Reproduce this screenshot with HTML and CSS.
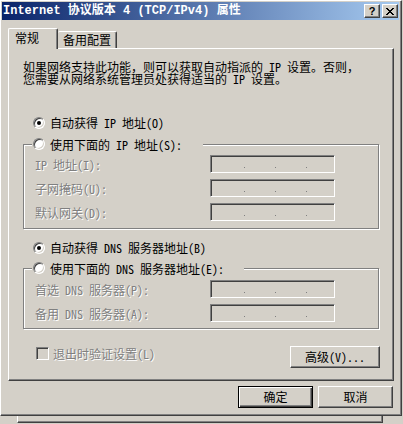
FILE: index.html
```html
<!DOCTYPE html>
<html lang="zh-CN">
<head>
<meta charset="utf-8">
<title>Internet 协议版本 4 (TCP/IPv4) 属性</title>
<link rel="stylesheet" href="styles.css">
</head>
<body>
<div class="window">
  <div class="titlebar">
    <span class="title">Internet 协议版本 4 (TCP/IPv4) 属性</span>
    <div class="tbtns">
      <span class="tbtn help">?</span>
      <span class="tbtn close"><svg width="8" height="7" viewBox="0 0 8 7" shape-rendering="crispEdges"><path d="M0 0h2v1h-2zM6 0h2v1h-2zM1 1h2v1h-2zM5 1h2v1h-2zM2 2h4v1h-4zM3 3h2v1h-2zM2 4h4v1h-4zM1 5h2v1h-2zM5 5h2v1h-2zM0 6h2v1h-2zM6 6h2v1h-2z" fill="#000"/></svg></span>
    </div>
  </div>
  <div class="body">
    <div class="tabs">
      <div class="tab active">常规</div>
      <div class="tab">备用配置</div>
    </div>
    <div class="panel">
      <p class="desc">如果网络支持此功能，则可以获取自动指派的 IP 设置。否则，<br>您需要从网络系统管理员处获得适当的 IP 设置。</p>
      <div class="opt opt-ip"><span class="radio on"></span><span>自动获得 IP 地址(O)</span></div>
      <fieldset class="group group-ip">
        <legend class="opt legend-ip"><span class="radio"></span><span>使用下面的 IP 地址(S):</span></legend>
        <div class="field"><span class="lbl">IP 地址(I):</span><span class="ip"><i class="dot"></i><i class="dot"></i><i class="dot"></i></span></div>
        <div class="field"><span class="lbl">子网掩码(U):</span><span class="ip"><i class="dot"></i><i class="dot"></i><i class="dot"></i></span></div>
        <div class="field"><span class="lbl">默认网关(D):</span><span class="ip"><i class="dot"></i><i class="dot"></i><i class="dot"></i></span></div>
      </fieldset>
      <div class="opt opt-dns"><span class="radio on"></span><span>自动获得 DNS 服务器地址(B)</span></div>
      <fieldset class="group group-dns">
        <legend class="opt legend-dns"><span class="radio"></span><span>使用下面的 DNS 服务器地址(E):</span></legend>
        <div class="field"><span class="lbl">首选 DNS 服务器(P):</span><span class="ip"><i class="dot"></i><i class="dot"></i><i class="dot"></i></span></div>
        <div class="field"><span class="lbl">备用 DNS 服务器(A):</span><span class="ip"><i class="dot"></i><i class="dot"></i><i class="dot"></i></span></div>
      </fieldset>
      <div class="bottomrow">
        <div class="chk-wrap"><span class="check"></span><span class="lbl-dis">退出时验证设置(L)</span></div>
        <button class="btn btn-adv">高级(V)...</button>
      </div>
    </div>
    <div class="actions">
      <button class="btn default">确定</button>
      <button class="btn">取消</button>
    </div>
  </div>
</div>
<div class="behind"></div>
</body>
</html>
```

FILE: styles.css
```css
html, body {
  margin: 0;
  padding: 0;
}
body {
  background: #d4d0c8;
  width: 403px;
  height: 424px;
  overflow: hidden;
  font-family: "Noto Sans Mono CJK SC", "Noto Sans CJK SC", sans-serif;
  font-size: 12px;
  color: #000;
}
.window {
  box-sizing: border-box;
  width: 402px;
  height: 416px;
  border: 1px solid;
  border-color: #fff #404040 #404040 #fff;
  box-shadow: inset -1px -1px 0 #808080;
  padding: 1px 2px 2px 1px;
  background: #d4d0c8;
}
.titlebar {
  height: 18px;
  display: flex;
  align-items: center;
  justify-content: space-between;
  background: linear-gradient(to right, #0a246a, #a6caf0);
  padding: 0 1px 0 1px;
}
.title {
  font-family: "Liberation Mono", "Noto Sans CJK SC", monospace;
  font-weight: bold;
  font-size: 12px;
  line-height: 14px;
  color: #fff;
  white-space: nowrap;
}
.tbtns {
  display: flex;
  gap: 2px;
}
.tbtn {
  box-sizing: border-box;
  width: 16px;
  height: 14px;
  background: #d4d0c8;
  border: 1px solid;
  border-color: #fff #404040 #404040 #fff;
  box-shadow: inset -1px -1px 0 #808080;
  display: flex;
  align-items: center;
  justify-content: center;
}
.help {
  font-family: "Liberation Sans", sans-serif;
  font-weight: bold;
  font-size: 11px;
  line-height: 11px;
  color: #000;
}
.body {
  padding: 8px 5px 0 6px;
}
.tabs {
  display: flex;
  align-items: flex-end;
  height: 20px;
}
.tab {
  box-sizing: border-box;
  height: 17px;
  width: 59px;
  padding: 1px 0 0 5px;
  line-height: 14px;
  border-top: 1px solid #fff;
  border-right: 1px solid #404040;
  box-shadow: inset -1px 0 0 #808080;
  border-radius: 2px 2px 0 0;
  background: #d4d0c8;
  white-space: nowrap;
}
.tab.active {
  position: relative;
  z-index: 1;
  width: 50px;
  height: 21px;
  margin-bottom: -1px;
  padding: 2px 0 0 6px;
  border-left: 1px solid #fff;
}
.panel {
  box-sizing: border-box;
  height: 333px;
  border: 1px solid;
  border-color: #fff #404040 #404040 #fff;
  box-shadow: inset -1px -1px 0 #808080;
  padding-top: 12px;
}
.desc {
  margin: 0 0 0 14px;
  line-height: 12px;
  white-space: nowrap;
}
.opt {
  display: flex;
  align-items: flex-start;
  gap: 5px;
  line-height: 12px;
  white-space: nowrap;
}
.opt-ip {
  margin: 32px 0 0 24px;
  height: 12px;
}
.opt-dns {
  margin: 13px 0 0 24px;
  height: 12px;
}
.radio {
  flex: none;
  box-sizing: border-box;
  width: 12px;
  height: 12px;
  border-radius: 50%;
  background: #fff;
  border: 1px solid;
  border-color: #808080 #fff #fff #808080;
  box-shadow: inset 1px 1px 0 #404040, inset -1px -1px 0 #d4d0c8;
  display: flex;
  align-items: center;
  justify-content: center;
}
.radio.on::after {
  content: "";
  width: 4px;
  height: 4px;
  border-radius: 50%;
  background: #000;
}
.group {
  box-sizing: border-box;
  width: 356px;
  min-inline-size: 0;
  margin: 0 0 0 14px;
  border: 1px solid #808080;
  box-shadow: 1px 1px 0 #fff, inset 1px 1px 0 #fff;
}
.group-ip {
  margin-top: 9px;
  padding: 4px 0 7px 0;
}
.group-dns {
  margin-top: 8px;
  padding: 5px 0 6px 0;
}
.group legend {
  box-sizing: border-box;
  height: 13px;
  line-height: 13px;
  margin-left: 8px;
  padding: 0 0 0 1px;
  background: #d4d0c8;
}
.legend-ip {
  width: 171px;
}
.legend-dns {
  width: 212px;
}
.field {
  display: flex;
  align-items: center;
  height: 18px;
  padding-left: 11px;
}
.field + .field {
  margin-top: 6px;
}
.lbl {
  width: 175px;
  color: #808080;
  text-shadow: 1px 1px 0 #fff;
  white-space: nowrap;
}
.ip {
  box-sizing: border-box;
  width: 125px;
  height: 18px;
  border: 1px solid;
  border-color: #808080 #fff #fff #808080;
  box-shadow: inset 1px 1px 0 #404040, inset -1px -1px 0 #d4d0c8;
  display: flex;
  align-items: flex-end;
  gap: 30px;
  padding: 0 0 4px 33px;
}
.dot {
  width: 1px;
  height: 1px;
  background: #808080;
}
.bottomrow {
  display: flex;
  justify-content: space-between;
  align-items: flex-start;
  margin-top: 17px;
  padding: 0 13px 0 27px;
}
.chk-wrap {
  display: flex;
  align-items: center;
  gap: 4px;
  margin-top: 1px;
  line-height: 13px;
}
.check {
  box-sizing: border-box;
  width: 13px;
  height: 13px;
  border: 1px solid;
  border-color: #808080 #fff #fff #808080;
  box-shadow: inset 1px 1px 0 #404040, inset -1px -1px 0 #d4d0c8;
  background: #d4d0c8;
}
.lbl-dis {
  color: #808080;
  text-shadow: 1px 1px 0 #fff;
  white-space: nowrap;
}
.btn {
  box-sizing: border-box;
  width: 75px;
  height: 22px;
  padding: 0;
  margin: 0;
  font: inherit;
  line-height: 12px;
  color: #000;
  background: #d4d0c8;
  border: 1px solid;
  border-color: #fff #404040 #404040 #fff;
  box-shadow: inset -1px -1px 0 #808080;
  border-radius: 0;
}
.btn-adv {
  width: 90px;
}
.btn.default {
  border-color: #000;
  box-shadow: inset 1px 1px 0 #fff, inset -1px -1px 0 #404040, inset -2px -2px 0 #808080;
}
.actions {
  display: flex;
  justify-content: flex-end;
  gap: 5px;
  margin: 5px 1px 0 0;
}
.behind {
  box-sizing: border-box;
  margin-left: 17px;
  width: 366px;
  height: 7px;
  border-left: 1px solid #fff;
  border-right: 1px solid #404040;
  border-bottom: 1px solid #404040;
  box-shadow: inset -1px -1px 0 #808080;
}
```
